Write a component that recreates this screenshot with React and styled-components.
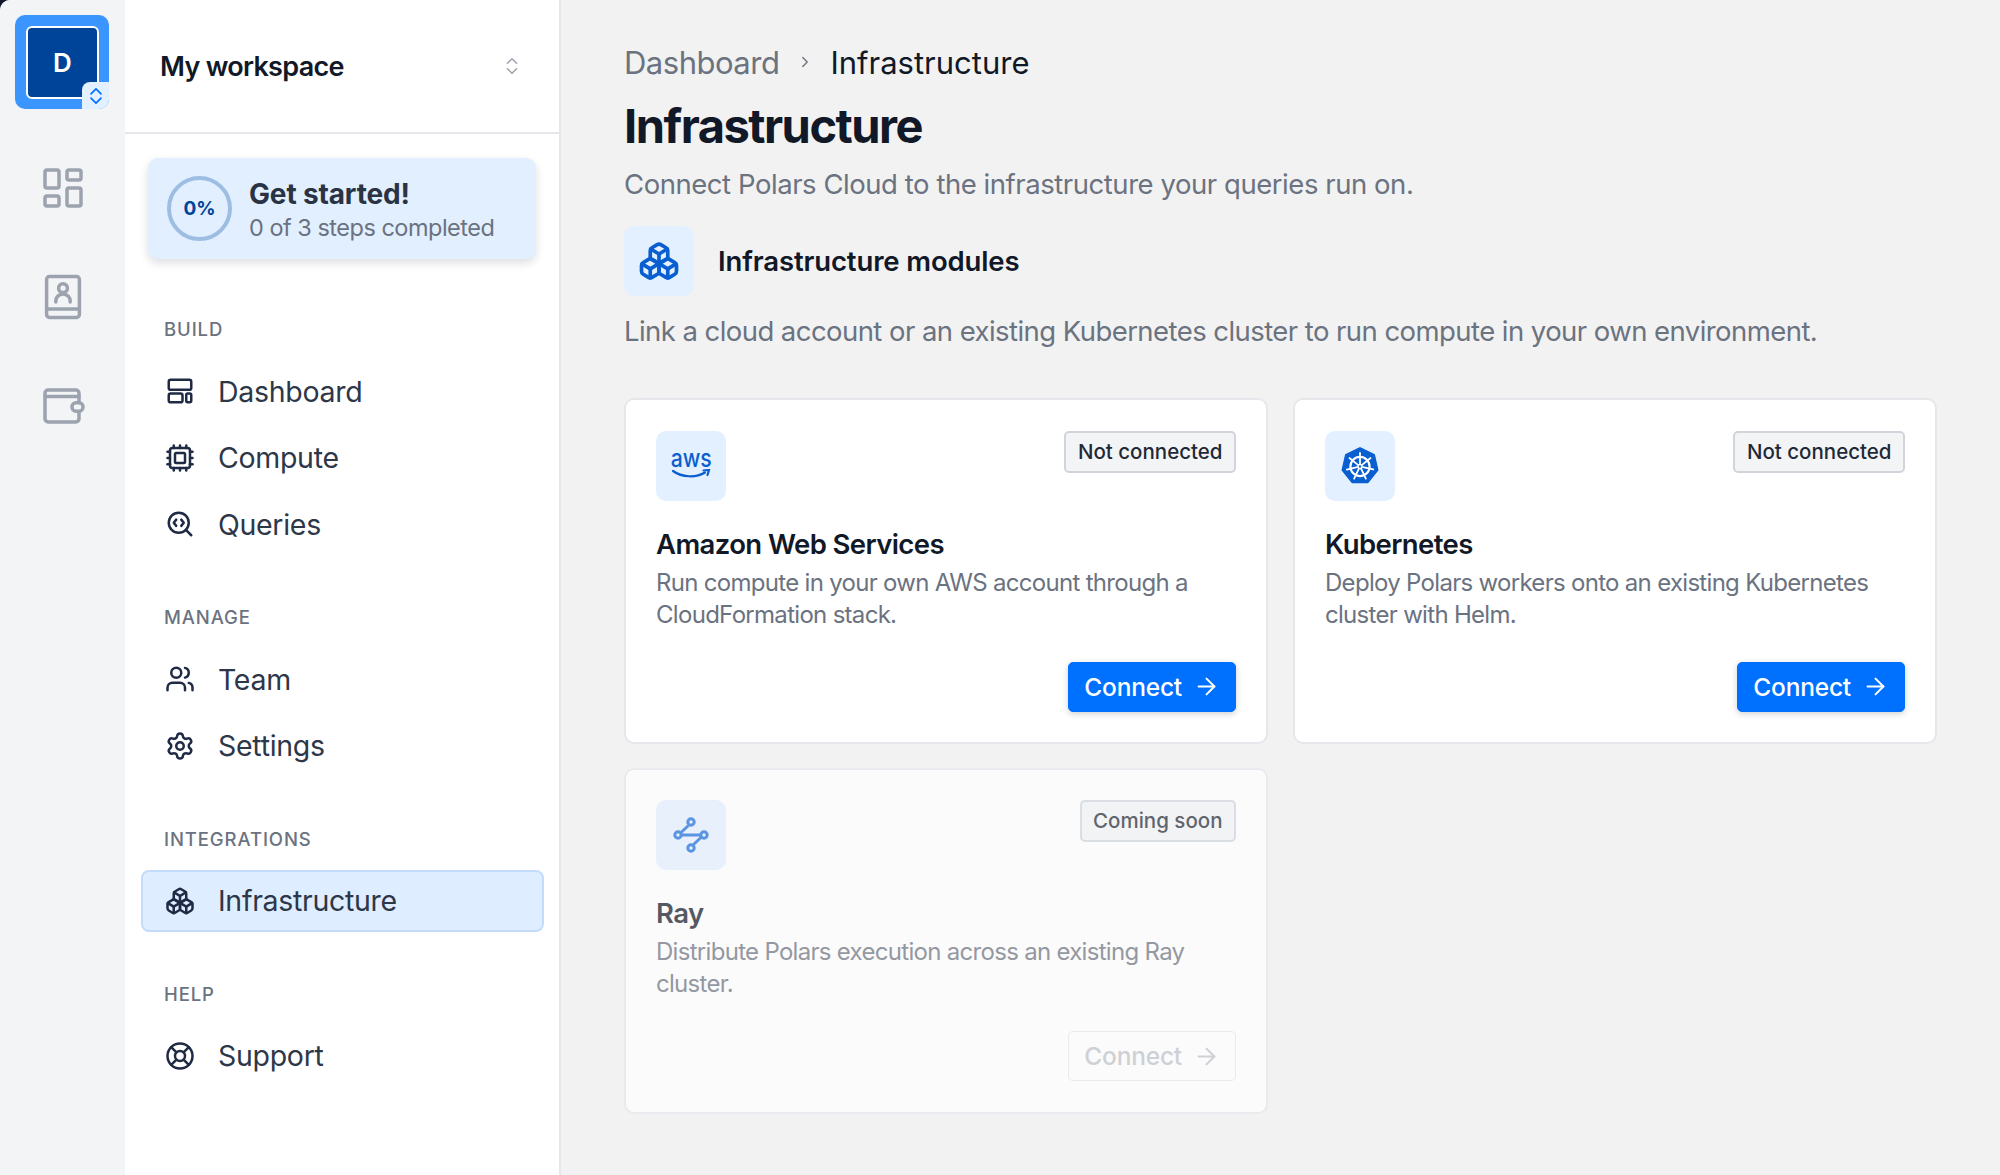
import React from "react"
import styled, { createGlobalStyle } from "styled-components"
import {
  ArrowRight,
  Boxes,
  ChevronRight,
  ChevronsUpDown,
  Cpu,
  LayoutDashboard,
  LifeBuoy,
  SearchCode,
  Settings,
  Users
} from "lucide-react"

const GlobalStyle = createGlobalStyle`
  html, body {
    margin: 0;
    background: #111827;
    font-family: "Inter", "Noto Sans", sans-serif;
  }
  * { box-sizing: border-box; }
`

const UpDown = (props) => (
  <svg viewBox="0 0 24 24" fill="none" stroke="currentColor" strokeWidth="2" strokeLinecap="round" strokeLinejoin="round" {...props}>
    <path d="M6 9.5 12 3.5l6 6" />
    <path d="M6 14.5 12 20.5l6-6" />
  </svg>
)

const ContactBook = (props) => (
  <svg viewBox="0 0 24 24" fill="none" stroke="currentColor" strokeWidth="1.75" strokeLinecap="round" strokeLinejoin="round" {...props}>
    <rect x="3.8" y="1.8" width="16.4" height="20.4" rx="1.4" />
    <path d="M3.8 18h16.4" />
    <circle cx="12" cy="7.6" r="2.2" />
    <path d="M8.4 14.5v-.4a3.6 3.6 0 0 1 7.2 0v.4" />
  </svg>
)

const WalletIcon = (props) => (
  <svg viewBox="0 0 24 24" fill="none" stroke="currentColor" strokeWidth="1.75" strokeLinecap="round" strokeLinejoin="round" {...props}>
    <path d="M20 14.8v3.6a1.6 1.6 0 0 1-1.6 1.6H4.6A1.6 1.6 0 0 1 3 18.4V5.6A1.6 1.6 0 0 1 4.6 4h13.8A1.6 1.6 0 0 1 20 5.6v4.6" />
    <path d="M3 7.2h17" />
    <rect x="16.5" y="10.4" width="5.5" height="4.2" rx="2" />
  </svg>
)

const PanelLayout = ({ size, strokeWidth }) => (
  <svg width={size} height={size} viewBox="0 0 24 24" fill="none" stroke="currentColor" strokeWidth={strokeWidth} strokeLinejoin="round">
    <rect x="3" y="3" width="18" height="8" rx="1.5" />
    <rect x="3" y="14" width="11" height="7" rx="1.5" />
    <rect x="17" y="14" width="4" height="7" rx="1.2" />
  </svg>
)

const RayIcon = (props) => (
  <svg viewBox="0 0 36 36" fill="none" stroke="currentColor" strokeWidth="3" {...props}>
    <path d="M15.5 8.5 7.5 16M8.5 18h19M28.5 20l-8 7.5" />
    <circle cx="18" cy="5" r="3.2" />
    <circle cx="5" cy="18" r="3.2" />
    <circle cx="31" cy="18" r="3.2" />
    <circle cx="18" cy="31" r="3.2" />
  </svg>
)

const KubernetesIcon = (props) => (
  <svg viewBox="0 0 40 40" {...props}>
    <polygon
      points="20,2.5 33.8,9.1 37.2,24 27.6,36 12.4,36 2.8,24 6.2,9.1"
      fill="#0a5fd0"
      stroke="#0a5fd0"
      strokeWidth="2.5"
      strokeLinejoin="round"
    />
    <g stroke="#fff" fill="none" strokeLinecap="round">
      <circle cx="20" cy="20.5" r="9.6" strokeWidth="2.2" />
      <circle cx="20" cy="20.5" r="2" strokeWidth="1.6" />
      {[0, 51.4, 102.8, 154.3, 205.7, 257.1, 308.6].map((deg) => (
        <path key={deg} d="M20 17.5V7" strokeWidth="1.8" transform={`rotate(${deg} 20 20.5)`} />
      ))}
    </g>
  </svg>
)

const navSections = [
  {
    title: "BUILD",
    items: [
      { label: "Dashboard", icon: PanelLayout },
      { label: "Compute", icon: Cpu },
      { label: "Queries", icon: SearchCode }
    ]
  },
  {
    title: "MANAGE",
    items: [
      { label: "Team", icon: Users },
      { label: "Settings", icon: Settings }
    ]
  },
  {
    title: "INTEGRATIONS",
    items: [{ label: "Infrastructure", icon: Boxes, active: true }]
  },
  {
    title: "HELP",
    items: [{ label: "Support", icon: LifeBuoy }]
  }
]

const ModuleCard = ({ logo, badge, title, text, disabled }) => (
  <Card $disabled={disabled}>
    <CardTop>
      <IconTile>{logo}</IconTile>
      <Badge>{badge}</Badge>
    </CardTop>
    <CardTitle>{title}</CardTitle>
    <CardText>{text}</CardText>
    <CardFooter>
      <ConnectButton $disabled={disabled}>
        Connect
        <ArrowRight size={27} strokeWidth={1.8} />
      </ConnectButton>
    </CardFooter>
  </Card>
)

export default function App() {
  return (
    <Shell>
      <GlobalStyle />
      <Rail>
        <Logo>
          <LogoInner>D</LogoInner>
          <LogoBadge>
            <UpDown width={20} height={24} />
          </LogoBadge>
        </Logo>
        <RailIcons>
          <LayoutDashboard size={48} strokeWidth={1.75} />
          <ContactBook width={48} height={48} />
          <WalletIcon width={48} height={48} />
        </RailIcons>
      </Rail>

      <Sidebar>
        <WorkspaceHeader>
          <WorkspaceName>My workspace</WorkspaceName>
          <ChevronsUpDown size={22} color="#9ca3af" strokeWidth={1.6} />
        </WorkspaceHeader>
        <SidebarBody>
          <StartCard>
            <ProgressRing>0%</ProgressRing>
            <StartText>
              <StartTitle>Get started!</StartTitle>
              <StartSub>0 of 3 steps completed</StartSub>
            </StartText>
          </StartCard>
          {navSections.map((section) => (
            <NavSection key={section.title}>
              <NavLabel>{section.title}</NavLabel>
              <NavList>
                {section.items.map((item) => (
                  <NavItem key={item.label} $active={item.active}>
                    <item.icon size={30} strokeWidth={2} />
                    {item.label}
                  </NavItem>
                ))}
              </NavList>
            </NavSection>
          ))}
        </SidebarBody>
      </Sidebar>

      <Main>
        <Breadcrumb>
          <Crumb>Dashboard</Crumb>
          <ChevronRight size={18} color="#6b7280" strokeWidth={1.8} />
          <Current>Infrastructure</Current>
        </Breadcrumb>
        <PageTitle>Infrastructure</PageTitle>
        <Lead>Connect Polars Cloud to the infrastructure your queries run on.</Lead>
        <SectionHead>
          <IconTile>
            <Boxes size={42} color="#0a5fd0" strokeWidth={2.1} />
          </IconTile>
          <SectionTitle>Infrastructure modules</SectionTitle>
        </SectionHead>
        <Description>
          Link a cloud account or an existing Kubernetes cluster to run compute in your own environment.
        </Description>
        <CardGrid>
          <ModuleCard
            logo={
              <AwsLogo>
                <AwsWord>aws</AwsWord>
                <svg width="40" height="10" viewBox="0 0 40 10" fill="none" stroke="#0a5fd0" strokeWidth="2.2" strokeLinecap="round">
                  <path d="M2 2c9 6.5 23 7 32 1.5" />
                  <path d="M32.5 1.5 38 1l-1.5 5" />
                </svg>
              </AwsLogo>
            }
            badge="Not connected"
            title="Amazon Web Services"
            text="Run compute in your own AWS account through a CloudFormation stack."
          />
          <ModuleCard
            logo={<KubernetesIcon width={40} height={40} />}
            badge="Not connected"
            title="Kubernetes"
            text="Deploy Polars workers onto an existing Kubernetes cluster with Helm."
          />
          <ModuleCard
            disabled
            logo={<RayIcon width={36} height={36} color="#1c6fdc" />}
            badge="Coming soon"
            title="Ray"
            text="Distribute Polars execution across an existing Ray cluster."
          />
        </CardGrid>
      </Main>
    </Shell>
  )
}

const Shell = styled.div`
  display: flex;
  width: 2000px;
  height: 1175px;
  overflow: hidden;
  background: #f2f2f2;
  border-top-left-radius: 10px;
`

const Rail = styled.aside`
  width: 125px;
  flex-shrink: 0;
  padding-top: 15px;
  background: #f3f4f6;
  color: #9ca3af;
`

const Logo = styled.div`
  position: relative;
  width: 94px;
  height: 94px;
  margin-left: 15px;
  padding: 11px 10px 10px 11px;
  border-radius: 10px;
  background: #3b95ff;
  overflow: hidden;
`

const LogoInner = styled.div`
  display: flex;
  align-items: center;
  justify-content: center;
  height: 73px;
  border: 2px solid #fff;
  border-radius: 6px;
  background: #00449a;
  color: #fff;
  font-size: 26px;
  font-weight: 600;
`

const LogoBadge = styled.div`
  position: absolute;
  right: 0;
  bottom: 0;
  display: flex;
  align-items: center;
  justify-content: center;
  width: 27px;
  height: 27px;
  border-top-left-radius: 8px;
  background: #e3f0ff;
  color: #0070ff;
`

const RailIcons = styled.div`
  display: flex;
  flex-direction: column;
  align-items: center;
  gap: 61px;
  margin-top: 55px;
`

const Sidebar = styled.nav`
  width: 436px;
  flex-shrink: 0;
  background: #fff;
  border-right: 2px solid #e5e7eb;
`

const WorkspaceHeader = styled.div`
  display: flex;
  align-items: center;
  justify-content: space-between;
  height: 134px;
  padding: 0 36px 0 35px;
  border-bottom: 2px solid #e5e7eb;
`

const WorkspaceName = styled.div`
  color: #111827;
  font-size: 27px;
  font-weight: 600;
  letter-spacing: -0.7px;
`

const SidebarBody = styled.div`
  padding: 24px 15px 0 16px;
`

const StartCard = styled.div`
  display: flex;
  align-items: center;
  gap: 17px;
  width: 388px;
  height: 101px;
  margin-left: 7px;
  padding-left: 19px;
  border-radius: 10px;
  background: #e2efff;
  box-shadow: 0 4px 10px rgba(17, 24, 39, 0.14);
`

const ProgressRing = styled.div`
  display: flex;
  align-items: center;
  justify-content: center;
  width: 65px;
  height: 65px;
  border: 4px solid #9dbde3;
  border-radius: 50%;
  color: #00449a;
  font-size: 19px;
  font-weight: 700;
`

const StartText = styled.div`
  padding-top: 3px;
`

const StartTitle = styled.div`
  color: #2a3344;
  font-size: 28px;
  font-weight: 700;
  line-height: 35px;
  letter-spacing: -0.15px;
`

const StartSub = styled.div`
  color: #6b7280;
  font-size: 23.5px;
  line-height: 32px;
  letter-spacing: -0.5px;
`

const NavSection = styled.section`
  margin-top: 50px;
  &:first-of-type {
    margin-top: 58px;
  }
`

const NavLabel = styled.div`
  height: 24px;
  margin-bottom: 19px;
  padding-left: 23px;
  color: #6b7280;
  font-size: 18.5px;
  font-weight: 500;
  line-height: 24px;
  letter-spacing: 0.9px;
`

const NavList = styled.div`
  display: flex;
  flex-direction: column;
  gap: 4.5px;
`

const NavItem = styled.a`
  display: flex;
  align-items: center;
  gap: 23.5px;
  height: 62px;
  padding-left: 21.5px;
  border: 2px solid ${(p) => (p.$active ? "#c4dcfb" : "transparent")};
  border-radius: 8px;
  background: ${(p) => (p.$active ? "#deedff" : "transparent")};
  color: #2d3748;
  font-size: 28.5px;
  letter-spacing: -0.3px;
  svg {
    color: #1f2a44;
    flex-shrink: 0;
  }
`

const Main = styled.main`
  flex: 1;
  padding: 42px 0 0 63px;
  background: #f2f2f2;
`

const Breadcrumb = styled.div`
  display: flex;
  align-items: center;
  gap: 16.5px;
  height: 40px;
  font-size: 31px;
`

const Crumb = styled.span`
  color: #6b7280;
  letter-spacing: -0.5px;
`

const Current = styled.span`
  color: #111827;
`

const PageTitle = styled.h1`
  margin: 14px 0 0;
  color: #111827;
  font-size: 47px;
  font-weight: 700;
  line-height: 60px;
  letter-spacing: -1.5px;
`

const Lead = styled.p`
  margin: 8px 0 0;
  color: #6b7280;
  font-size: 27.5px;
  line-height: 40px;
  letter-spacing: -0.45px;
`

const SectionHead = styled.div`
  display: flex;
  align-items: center;
  gap: 24px;
  margin-top: 22px;
`

const IconTile = styled.div`
  display: flex;
  align-items: center;
  justify-content: center;
  width: 70px;
  height: 70px;
  border-radius: 10px;
  background: #e3f0ff;
`

const SectionTitle = styled.h2`
  margin: 0;
  color: #111827;
  font-size: 27.5px;
  font-weight: 600;
  letter-spacing: -0.13px;
`

const Description = styled.p`
  margin: 15px 0 0;
  color: #6b7280;
  font-size: 27.5px;
  line-height: 40px;
  letter-spacing: -0.56px;
`

const CardGrid = styled.div`
  display: grid;
  grid-template-columns: 644px 644px;
  gap: 23.5px 25px;
  margin-top: 47px;
`

const Card = styled.article`
  padding: 30.5px 30px 30.5px;
  border: 2px solid #e5e7eb;
  border-radius: 10px;
  background: #fff;
  opacity: ${(p) => (p.$disabled ? 0.7 : 1)};
`

const CardTop = styled.div`
  display: flex;
  align-items: flex-start;
  justify-content: space-between;
`

const Badge = styled.span`
  padding: 0 11.5px;
  border: 2px solid #d1d5db;
  border-radius: 5px;
  background: #f3f4f6;
  color: #1f2937;
  font-size: 20.5px;
  font-weight: 500;
  line-height: 38px;
`

const CardTitle = styled.h3`
  margin: 23px 0 0;
  color: #111827;
  font-size: 27.5px;
  font-weight: 600;
  line-height: 40px;
  letter-spacing: -0.6px;
`

const CardText = styled.p`
  height: 64px;
  margin: 3px 0 0;
  color: #6b7280;
  font-size: 24px;
  line-height: 32px;
  letter-spacing: -0.7px;
`

const CardFooter = styled.div`
  display: flex;
  justify-content: flex-end;
  margin-top: 31px;
`

const ConnectButton = styled.button`
  display: flex;
  align-items: center;
  gap: 11px;
  height: 50px;
  padding: 0 15px 0 15px;
  border: 1px solid ${(p) => (p.$disabled ? "#e5e7eb" : "#0070ff")};
  border-radius: 5px;
  background: ${(p) => (p.$disabled ? "transparent" : "#0070ff")};
  box-shadow: ${(p) => (p.$disabled ? "none" : "0 2px 6px rgba(17, 24, 39, 0.2)")};
  color: ${(p) => (p.$disabled ? "#bfc3c9" : "#fff")};
  font-family: inherit;
  font-size: 24.5px;
  font-weight: 500;
  letter-spacing: -0.2px;
`

const AwsLogo = styled.div`
  display: flex;
  flex-direction: column;
  align-items: center;
  margin-bottom: 6px;
`

const AwsWord = styled.span`
  margin-bottom: -1px;
  color: #0a5fd0;
  font-size: 25px;
  font-weight: 500;
  line-height: 24px;
  transform: scaleX(0.85);
`
